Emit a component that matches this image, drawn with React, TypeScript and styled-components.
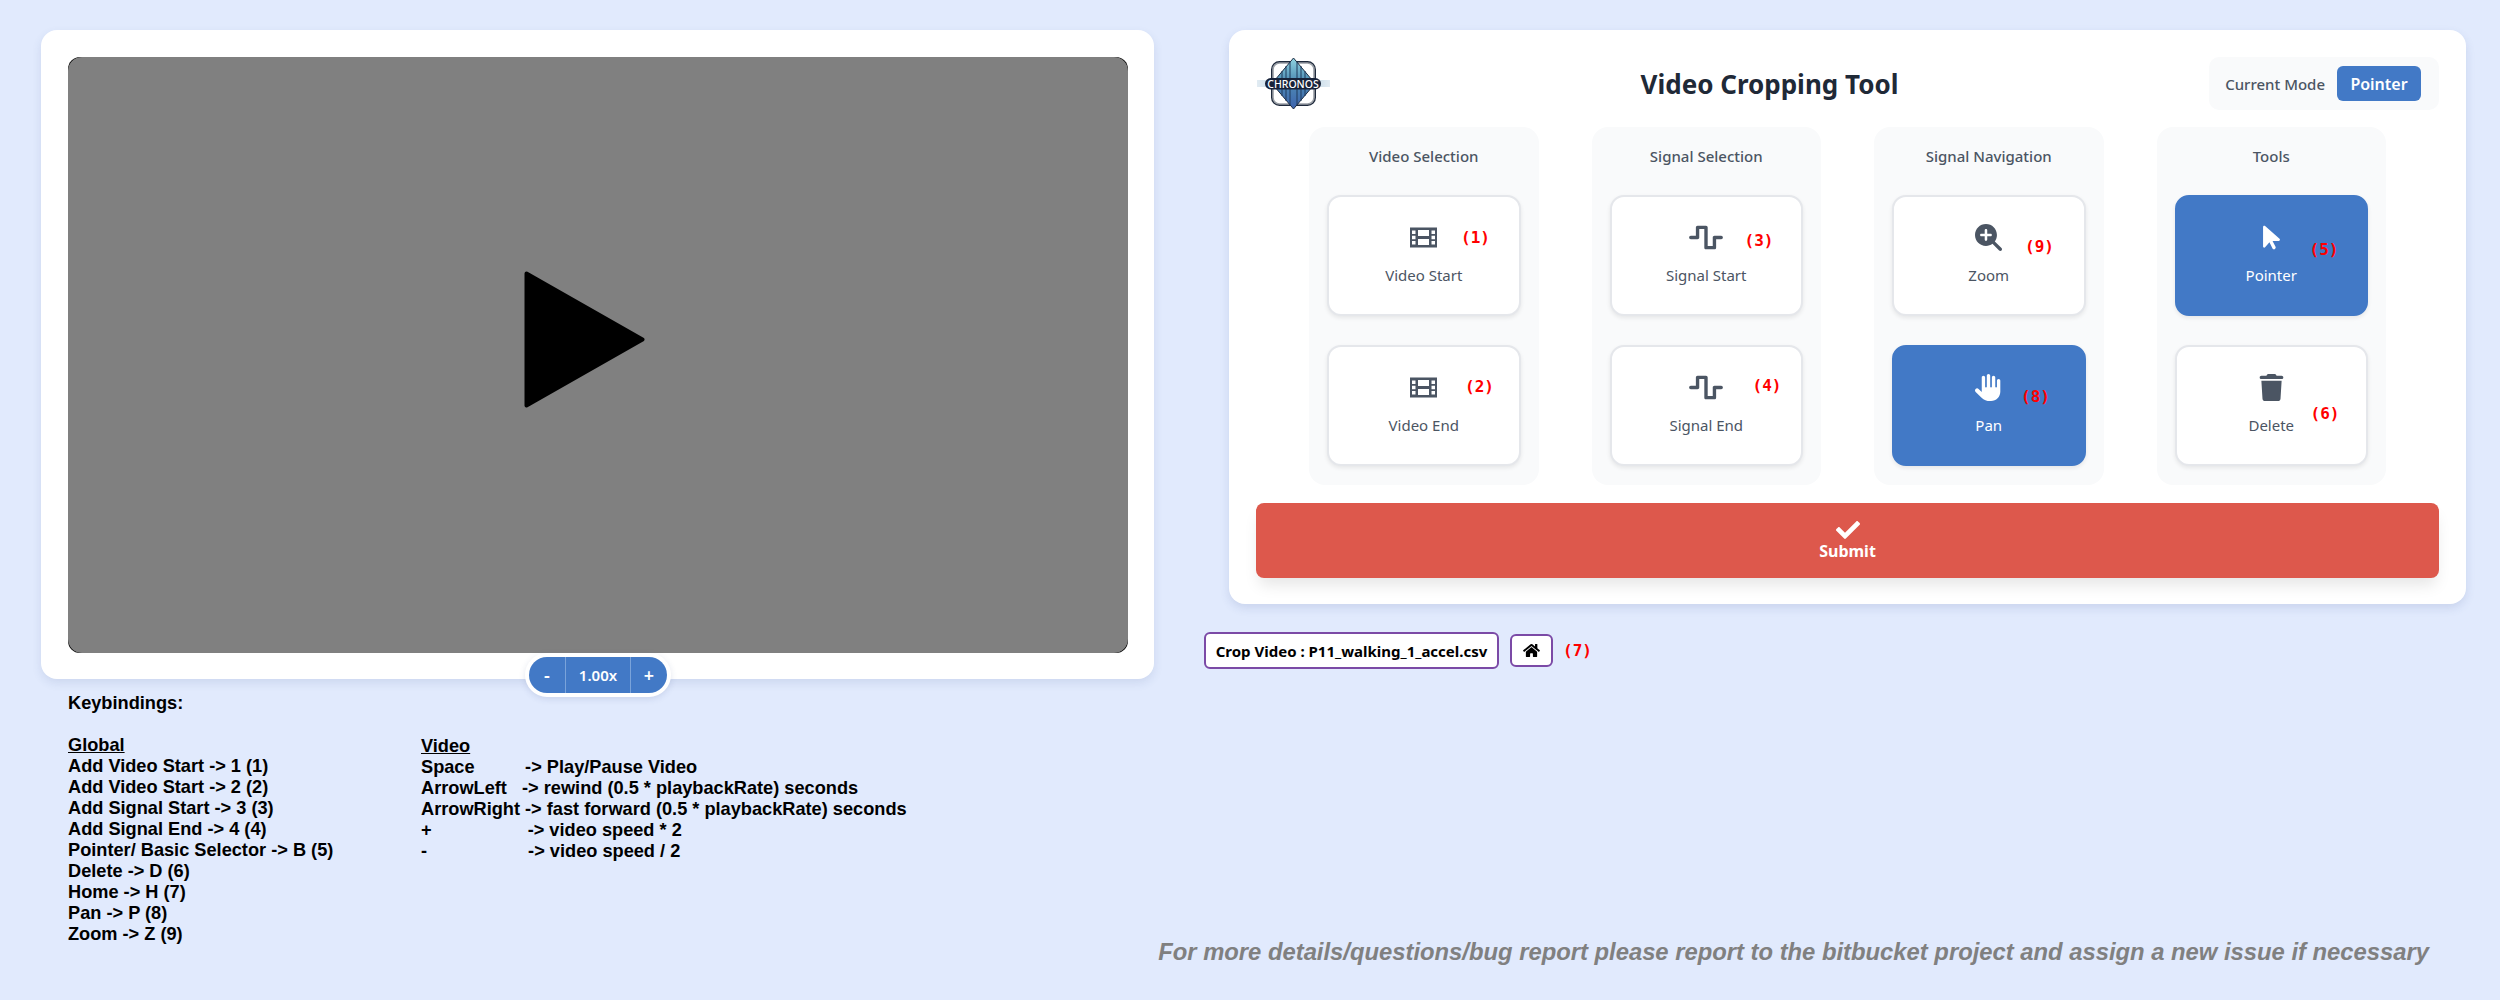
import React from "react";
import styled, { createGlobalStyle } from "styled-components";
import { FaWaveSquare, FaMagnifyingGlassPlus, FaArrowPointer, FaHand, FaTrash } from "react-icons/fa6";
import { FaHome, FaCheck } from "react-icons/fa";

const Global = createGlobalStyle`
  html, body { margin: 0; padding: 0; background: #e1eafd; }
  * { box-sizing: border-box; }
`;

const UI = `"Noto Sans", "Open Sans", sans-serif`;
const BLUE = "#4279c6";

const Page = styled.div`
  display: flex;
  gap: 75px;
  width: 2500px;
  height: 1000px;
  padding: 30px 34px 0 41px;
  overflow: hidden;
`;

const LeftColumn = styled.div`
  width: 1113px;
  flex: none;
`;

const VideoCard = styled.div`
  position: relative;
  background: #fff;
  border-radius: 16px;
  padding: 27px 26px 26px 27px;
  box-shadow: 0 4px 10px rgba(60, 80, 140, 0.12);
`;

const VideoFrame = styled.div`
  height: 596px;
  background: #000;
  border-radius: 12px;
`;

const VideoSurface = styled.div`
  height: 100%;
  background: #808080;
  border-radius: 14px;
  display: flex;
  align-items: center;
  justify-content: center;
  padding: 0 27px 31px 0;
`;

const SpeedPill = styled.div`
  position: absolute;
  left: 484px;
  top: 623px;
  width: 146px;
  height: 44px;
  display: flex;
  background: #fff;
  border: 4px solid #fff;
  border-radius: 22px;
  box-shadow: 0 2px 6px rgba(60, 80, 140, 0.15);
`;

const SpeedPart = styled.div<{ $w: number; $divider?: boolean }>`
  width: ${(p) => p.$w}px;
  background: ${BLUE};
  color: #fff;
  font: 600 ${(p) => (p.$w > 50 ? 15 : 18)}px ${UI};
  display: flex;
  align-items: center;
  justify-content: center;
  border-right: ${(p) => (p.$divider ? "1px solid #7aa3da" : "none")};
  &:first-child { border-radius: 18px 0 0 18px; }
  &:last-child { border-radius: 0 18px 18px 0; }
`;

const Keys = styled.div`
  margin: 14px 0 0 27px;
  font: bold 18.2px/21px "Liberation Sans", Arial, sans-serif;
  color: #000;
`;

const KeysTitle = styled.div`
  margin-bottom: 21px;
`;

const KeysColumns = styled.div`
  display: flex;
`;

const KeysColumn = styled.div<{ $w: number; $shift?: number }>`
  width: ${(p) => p.$w}px;
  margin-top: ${(p) => p.$shift ?? 0}px;
  white-space: pre;
`;

const KeysHeading = styled.div`
  text-decoration: underline;
`;

const RightColumn = styled.div`
  width: 1237px;
  flex: none;
  display: flex;
  flex-direction: column;
`;

const ToolCard = styled.div`
  background: #fff;
  border-radius: 16px;
  padding: 27px 27px 26px;
  box-shadow: 0 4px 10px rgba(60, 80, 140, 0.14);
`;

const Header = styled.div`
  display: flex;
  align-items: center;
  justify-content: space-between;
  height: 53px;
  margin-bottom: 17px;
`;

const Title = styled.h1`
  margin: 0;
  font: 700 26px ${UI};
  color: #1f2937;
`;

const ModeBox = styled.div`
  width: 230px;
  height: 53px;
  background: #f9fafb;
  border-radius: 10px;
  display: flex;
  align-items: center;
  justify-content: flex-end;
  gap: 12px;
  padding-right: 18px;
`;

const ModeLabel = styled.span`
  font: 500 15px ${UI};
  color: #4b5563;
`;

const ModeChip = styled.span`
  width: 84px;
  height: 35px;
  border-radius: 6px;
  background: ${BLUE};
  color: #fff;
  font: 600 16px ${UI};
  display: flex;
  align-items: center;
  justify-content: center;
`;

const Groups = styled.div`
  display: flex;
  justify-content: center;
  gap: 53px;
`;

const Group = styled.section`
  width: 229.5px;
  background: #f9fafb;
  border-radius: 16px;
  padding: 19px 18px 19px;
  display: flex;
  flex-direction: column;
  gap: 29px;
`;

const GroupTitle = styled.div`
  height: 20px;
  text-align: center;
  font: 500 15px/20px ${UI};
  color: #4b5563;
`;

const ToolButton = styled.div<{ $active?: boolean }>`
  position: relative;
  height: 121px;
  border-radius: 14px;
  background: ${(p) => (p.$active ? BLUE : "#fff")};
  border: 2px solid ${(p) => (p.$active ? BLUE : "#e5e7eb")};
  box-shadow: 0 2px 4px rgba(0, 0, 0, 0.08);
  color: ${(p) => (p.$active ? "#fff" : "#4b5563")};
  display: flex;
  flex-direction: column;
  align-items: center;
  padding-top: 27px;
  gap: 14px;
  font: 400 15px ${UI};
  svg { width: 27px; height: 27px; display: block; }
`;

const WaveIcon = styled(FaWaveSquare)`
  && { width: 34px; }
`;

const ButtonLabel = styled.span`
  line-height: 20px;
`;

const Hotkey = styled.span<{ $x: number; $y: number }>`
  position: absolute;
  left: ${(p) => p.$x}px;
  top: ${(p) => p.$y}px;
  font: bold 16px/18px "DejaVu Sans Mono", "Liberation Mono", monospace;
  color: #f00;
`;

const Submit = styled.div`
  margin-top: 18px;
  height: 75px;
  border-radius: 8px;
  background: #dd584c;
  color: #fff;
  font: 700 16px/22px ${UI};
  display: flex;
  flex-direction: column;
  align-items: center;
  justify-content: center;
  padding-bottom: 2px;
  box-shadow: 0 10px 15px -3px rgba(0, 0, 0, 0.1);
  svg { width: 24px; height: 24px; display: block; margin-bottom: -2px; }
`;

const CropRow = styled.div`
  display: flex;
  align-items: center;
  margin: 28px 0 0 -25px;
`;

const CropName = styled.div`
  height: 37px;
  width: 295px;
  border: 2px solid #7b4aa6;
  border-radius: 6px;
  background: #fff;
  color: #000;
  font: 700 15px ${UI};
  display: flex;
  align-items: center;
  justify-content: center;
  white-space: nowrap;
`;

const HomeButton = styled.div`
  height: 33px;
  width: 43px;
  margin-left: 11px;
  border: 2px solid #7b4aa6;
  border-radius: 6px;
  background: #fff;
  color: #000;
  display: flex;
  align-items: center;
  justify-content: center;
  svg { width: 17px; height: 15px; display: block; }
`;

const HomeKey = styled.span`
  margin-left: 10px;
  font: bold 16px/18px "DejaVu Sans Mono", "Liberation Mono", monospace;
  color: #f00;
`;

const Footer = styled.div`
  margin-top: auto;
  margin-bottom: 35px;
  margin-right: 37px;
  align-self: flex-end;
  font: italic bold 23.8px/26px "Liberation Sans", Arial, sans-serif;
  color: #808080;
  white-space: nowrap;
`;

const Logo = () => (
  <svg width="74" height="52" viewBox="0 0 74 52" role="img" aria-label="Chronos logo">
    <defs>
      <linearGradient id="dia" x1="0" y1="0" x2="0" y2="1">
        <stop offset="0" stopColor="#8fd3e0" />
        <stop offset="0.45" stopColor="#4f8db5" />
        <stop offset="1" stopColor="#3c62ad" />
      </linearGradient>
      <linearGradient id="wing" x1="0" y1="0" x2="1" y2="0">
        <stop offset="0" stopColor="#c4d8e6" stopOpacity="0.5" />
        <stop offset="0.5" stopColor="#8fb8d4" />
        <stop offset="1" stopColor="#c4d8e6" stopOpacity="0.5" />
      </linearGradient>
    </defs>
    <rect x="1" y="22" width="73" height="7" fill="url(#wing)" />
    <rect x="16.5" y="4.5" width="42" height="42" rx="7" fill="#fff" stroke="#1f2a3c" strokeWidth="3" />
    <rect x="17" y="5" width="41" height="41" rx="6.5" fill="#fff" stroke="#9a9fa6" strokeWidth="1.6" />
    <path d="M37.5 0 L59 25.5 L37.5 51 L16 25.5 Z" fill="url(#dia)" stroke="#1c2a40" strokeWidth="1" />
    <path d="M30 8V43M34 4V47M41 4V47M45 8V43M26 13V38M49 13V38" stroke="#1f3a5c" strokeWidth="1" />
    <rect x="9" y="20" width="56" height="11.5" rx="5.7" fill="#18233a" />
    <text x="37" y="29.5" textAnchor="middle" fontFamily="'Noto Sans', sans-serif" fontSize="10.5" fontWeight="500" fill="#fff">CHRONOS</text>
  </svg>
);

const PlayIcon = () => (
  <svg width="121" height="137" viewBox="0 0 121 137">
    <path d="M2.5 2.5 L118.5 68.5 L2.5 134.5 Z" fill="#000" stroke="#000" strokeWidth="4" strokeLinejoin="round" />
  </svg>
);

const FilmIcon = () => (
  <svg viewBox="0 -3.5 27 27">
    <path
      fill="currentColor"
      fillRule="evenodd"
      d="M0 0H27V20H0Z M2 3V6.5H5.5V3Z M2 8.2V11.8H5.5V8.2Z M2 13.5V17H5.5V13.5Z M21.5 3V6.5H25V3Z M21.5 8.2V11.8H25V8.2Z M21.5 13.5V17H25V13.5Z M8 2.5V8.5H19V2.5Z M8 11.5V17.5H19V11.5Z"
    />
  </svg>
);

const global = `Add Video Start -> 1 (1)
Add Video Start -> 2 (2)
Add Signal Start -> 3 (3)
Add Signal End -> 4 (4)
Pointer/ Basic Selector -> B (5)
Delete -> D (6)
Home -> H (7)
Pan -> P (8)
Zoom -> Z (9)`;

const video = `Space          -> Play/Pause Video
ArrowLeft   -> rewind (0.5 * playbackRate) seconds
ArrowRight -> fast forward (0.5 * playbackRate) seconds
+                   -> video speed * 2
-                    -> video speed / 2`;

type Tool = { label: string; icon: React.ReactNode; key: string; x: number; y: number; active?: boolean };
const groups: { title: string; tools: Tool[] }[] = [
  {
    title: "Video Selection",
    tools: [
      { label: "Video Start", icon: <FilmIcon />, key: "(1)", x: 132, y: 32 },
      { label: "Video End", icon: <FilmIcon />, key: "(2)", x: 136, y: 31 },
    ],
  },
  {
    title: "Signal Selection",
    tools: [
      { label: "Signal Start", icon: <WaveIcon />, key: "(3)", x: 133, y: 35 },
      { label: "Signal End", icon: <WaveIcon />, key: "(4)", x: 141, y: 30 },
    ],
  },
  {
    title: "Signal Navigation",
    tools: [
      { label: "Zoom", icon: <FaMagnifyingGlassPlus />, key: "(9)", x: 131, y: 41 },
      { label: "Pan", icon: <FaHand />, key: "(8)", x: 127, y: 41, active: true },
    ],
  },
  {
    title: "Tools",
    tools: [
      { label: "Pointer", icon: <FaArrowPointer />, key: "(5)", x: 133, y: 44, active: true },
      { label: "Delete", icon: <FaTrash />, key: "(6)", x: 134, y: 58 },
    ],
  },
];

export default function App() {
  return (
    <>
      <Global />
      <Page>
        <LeftColumn>
          <VideoCard>
            <VideoFrame>
              <VideoSurface>
                <PlayIcon />
              </VideoSurface>
            </VideoFrame>
            <SpeedPill>
              <SpeedPart $w={37} $divider>-</SpeedPart>
              <SpeedPart $w={65} $divider>1.00x</SpeedPart>
              <SpeedPart $w={36}>+</SpeedPart>
            </SpeedPill>
          </VideoCard>
          <Keys>
            <KeysTitle>Keybindings:</KeysTitle>
            <KeysColumns>
              <KeysColumn $w={353}>
                <KeysHeading>Global</KeysHeading>
                {global}
              </KeysColumn>
              <KeysColumn $w={700} $shift={1}>
                <KeysHeading>Video</KeysHeading>
                {video}
              </KeysColumn>
            </KeysColumns>
          </Keys>
        </LeftColumn>
        <RightColumn>
          <ToolCard>
            <Header>
              <Logo />
              <Title>Video Cropping Tool</Title>
              <ModeBox>
                <ModeLabel>Current Mode</ModeLabel>
                <ModeChip>Pointer</ModeChip>
              </ModeBox>
            </Header>
            <Groups>
              {groups.map((g) => (
                <Group key={g.title}>
                  <GroupTitle>{g.title}</GroupTitle>
                  {g.tools.map((t) => (
                    <ToolButton key={t.label} $active={t.active}>
                      {t.icon}
                      <ButtonLabel>{t.label}</ButtonLabel>
                      <Hotkey $x={t.x} $y={t.y}>{t.key}</Hotkey>
                    </ToolButton>
                  ))}
                </Group>
              ))}
            </Groups>
            <Submit>
              <FaCheck />
              Submit
            </Submit>
          </ToolCard>
          <CropRow>
            <CropName>Crop Video : P11_walking_1_accel.csv</CropName>
            <HomeButton><FaHome /></HomeButton>
            <HomeKey>(7)</HomeKey>
          </CropRow>
          <Footer>For more details/questions/bug report please report to the bitbucket project and assign a new issue if necessary</Footer>
        </RightColumn>
      </Page>
    </>
  );
}
